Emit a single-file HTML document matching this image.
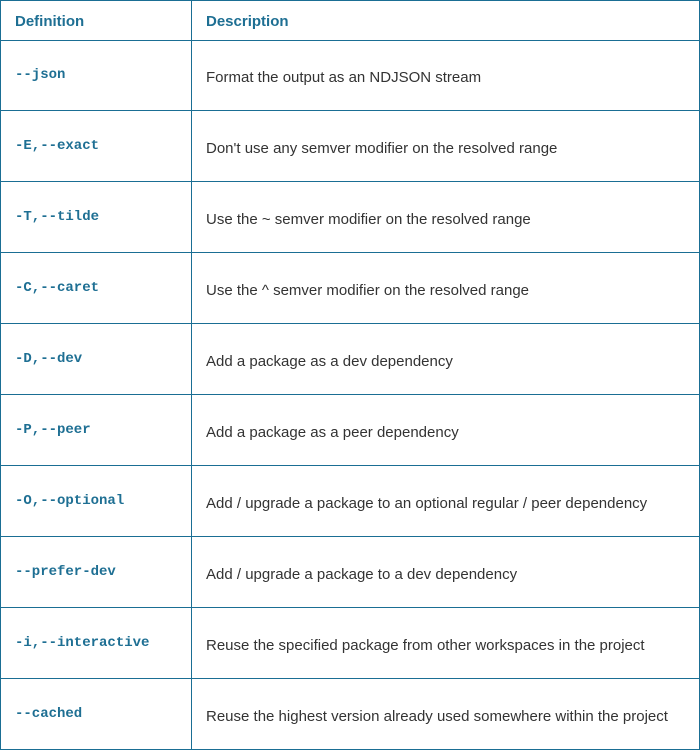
<!DOCTYPE html>
<html><head><style>
html,body{margin:0;padding:0;background:#fff;}
.t{position:relative;width:700px;height:753px;}
.r{position:absolute;left:0;width:698px;border:1px solid #1a6e94;border-top:none;display:flex;}
.r.h{top:0;height:39px;border-top:1px solid #1a6e94;}
.a{width:176px;padding-left:14px;border-right:1px solid #1a6e94;display:flex;align-items:center;}
.b{padding-left:14px;display:flex;align-items:center;}
.h div{font:bold 15px "Liberation Sans",sans-serif;color:#1e6f93;padding-top:2px;}
.d .a{font:bold 14px "Liberation Mono",monospace;color:#1e6f93;}
.d .b{font:15px "Liberation Sans",sans-serif;color:#333;padding-top:4px;}
</style></head><body>
<div class="t">
<div class="r h"><div class="a">Definition</div><div class="b">Description</div></div>
<div class="r d" style="top:40px;height:70px"><div class="a">--json</div><div class="b">Format the output as an NDJSON stream</div></div>
<div class="r d" style="top:111px;height:70px"><div class="a">-E,--exact</div><div class="b">Don't use any semver modifier on the resolved range</div></div>
<div class="r d" style="top:182px;height:70px"><div class="a">-T,--tilde</div><div class="b">Use the ~ semver modifier on the resolved range</div></div>
<div class="r d" style="top:253px;height:70px"><div class="a">-C,--caret</div><div class="b">Use the ^ semver modifier on the resolved range</div></div>
<div class="r d" style="top:324px;height:70px"><div class="a">-D,--dev</div><div class="b">Add a package as a dev dependency</div></div>
<div class="r d" style="top:395px;height:70px"><div class="a">-P,--peer</div><div class="b">Add a package as a peer dependency</div></div>
<div class="r d" style="top:466px;height:70px"><div class="a">-O,--optional</div><div class="b">Add / upgrade a package to an optional regular / peer dependency</div></div>
<div class="r d" style="top:537px;height:70px"><div class="a">--prefer-dev</div><div class="b">Add / upgrade a package to a dev dependency</div></div>
<div class="r d" style="top:608px;height:70px"><div class="a">-i,--interactive</div><div class="b">Reuse the specified package from other workspaces in the project</div></div>
<div class="r d" style="top:679px;height:70px"><div class="a">--cached</div><div class="b">Reuse the highest version already used somewhere within the project</div></div>
</div>
</body></html>
